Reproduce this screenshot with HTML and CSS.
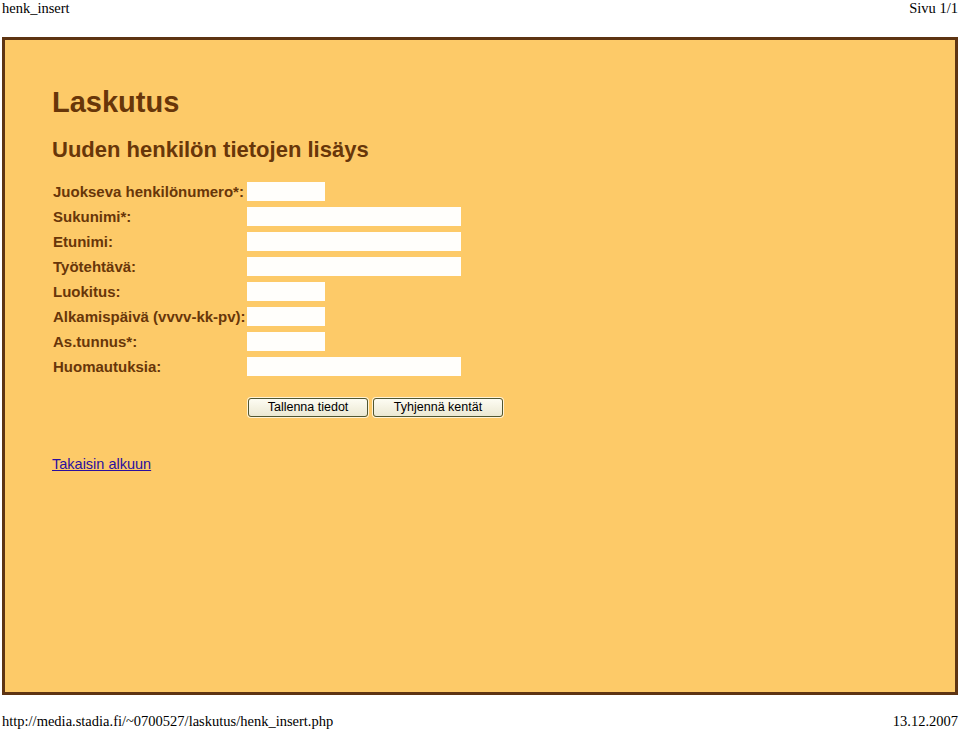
FILE: index.html
```html
<!DOCTYPE html>
<html lang="fi">
<head>
<meta charset="utf-8">
<title>henk_insert</title>
<link rel="stylesheet" href="styles.css">
</head>
<body>
<div class="page-head">
  <span>henk_insert</span>
  <span>Sivu 1/1</span>
</div>
<div class="sheet">
  <h1 class="title">Laskutus</h1>
  <h2 class="subtitle">Uuden henkilön tietojen lisäys</h2>
  <form class="form">
    <label class="lbl">Juokseva henkilönumero*:</label><span class="field short"></span>
    <label class="lbl">Sukunimi*:</label><span class="field long"></span>
    <label class="lbl">Etunimi:</label><span class="field long"></span>
    <label class="lbl">Työtehtävä:</label><span class="field long"></span>
    <label class="lbl">Luokitus:</label><span class="field short"></span>
    <label class="lbl">Alkamispäivä (vvvv-kk-pv):</label><span class="field short"></span>
    <label class="lbl">As.tunnus*:</label><span class="field short"></span>
    <label class="lbl">Huomautuksia:</label><span class="field long"></span>
    <span></span>
    <div class="buttons">
      <button type="button" class="btn save">Tallenna tiedot</button>
      <button type="button" class="btn clear">Tyhjennä kentät</button>
    </div>
  </form>
  <a class="back" href="#">Takaisin alkuun</a>
</div>
<div class="page-foot">
  <span>http://media.stadia.fi/~0700527/laskutus/henk_insert.php</span>
  <span>13.12.2007</span>
</div>
</body>
</html>
```

FILE: styles.css
```css
html, body {
  margin: 0;
  padding: 0;
  background: #ffffff;
}
body {
  width: 960px;
  height: 730px;
  overflow: hidden;
  font-family: "Liberation Serif", "Times New Roman", serif;
  color: #000;
}
.page-head, .page-foot {
  display: flex;
  justify-content: space-between;
  padding: 0 2px 0 2px;
  font-size: 14.5px;
  line-height: 16px;
  font-family: "Liberation Serif", serif;
}
.page-foot {
  margin-top: 18px;
  line-height: 17px;
}
.sheet {
  box-sizing: border-box;
  margin: 21px 2px 0 2px;
  height: 658px;
  background: #fdca68;
  border: 3px solid #5e3412;
  padding: 45px 0 0 47px;
  font-family: "Liberation Sans", Arial, sans-serif;
  color: #683609;
}
.title {
  margin: 0;
  font-size: 29px;
  line-height: 34px;
  font-weight: bold;
}
.subtitle {
  margin: 18px 0 0 0;
  font-size: 22px;
  line-height: 26px;
  font-weight: bold;
}
.form {
  margin-top: 19px;
  display: grid;
  grid-template-columns: 195px auto;
  row-gap: 6px;
  align-items: start;
}
.lbl {
  font-size: 15px;
  line-height: 19px;
  font-weight: bold;
  padding-left: 1px;
  white-space: nowrap;
}
.field {
  display: block;
  height: 19px;
  background: #fffefb;
}
.field.short { width: 78px; }
.field.long { width: 214px; }
.buttons {
  display: flex;
  gap: 5px;
  margin-top: 16px;
  margin-left: 1px;
}
.btn {
  box-sizing: border-box;
  height: 19px;
  padding: 0;
  font-family: "Liberation Sans", Arial, sans-serif;
  font-size: 12.5px;
  line-height: 15px;
  color: #000;
  background: linear-gradient(#fdfcf3, #ebe8d2);
  border: 1px solid #4f5632;
  border-radius: 3px;
  box-shadow: 0 0 0 1px #fff3d6;
}
.btn.save { width: 120px; }
.btn.clear { width: 130px; }
.back {
  display: inline-block;
  margin-top: 39px;
  font-size: 14.5px;
  line-height: 17px;
  color: #2a0f9f;
  text-decoration: underline;
}
```
